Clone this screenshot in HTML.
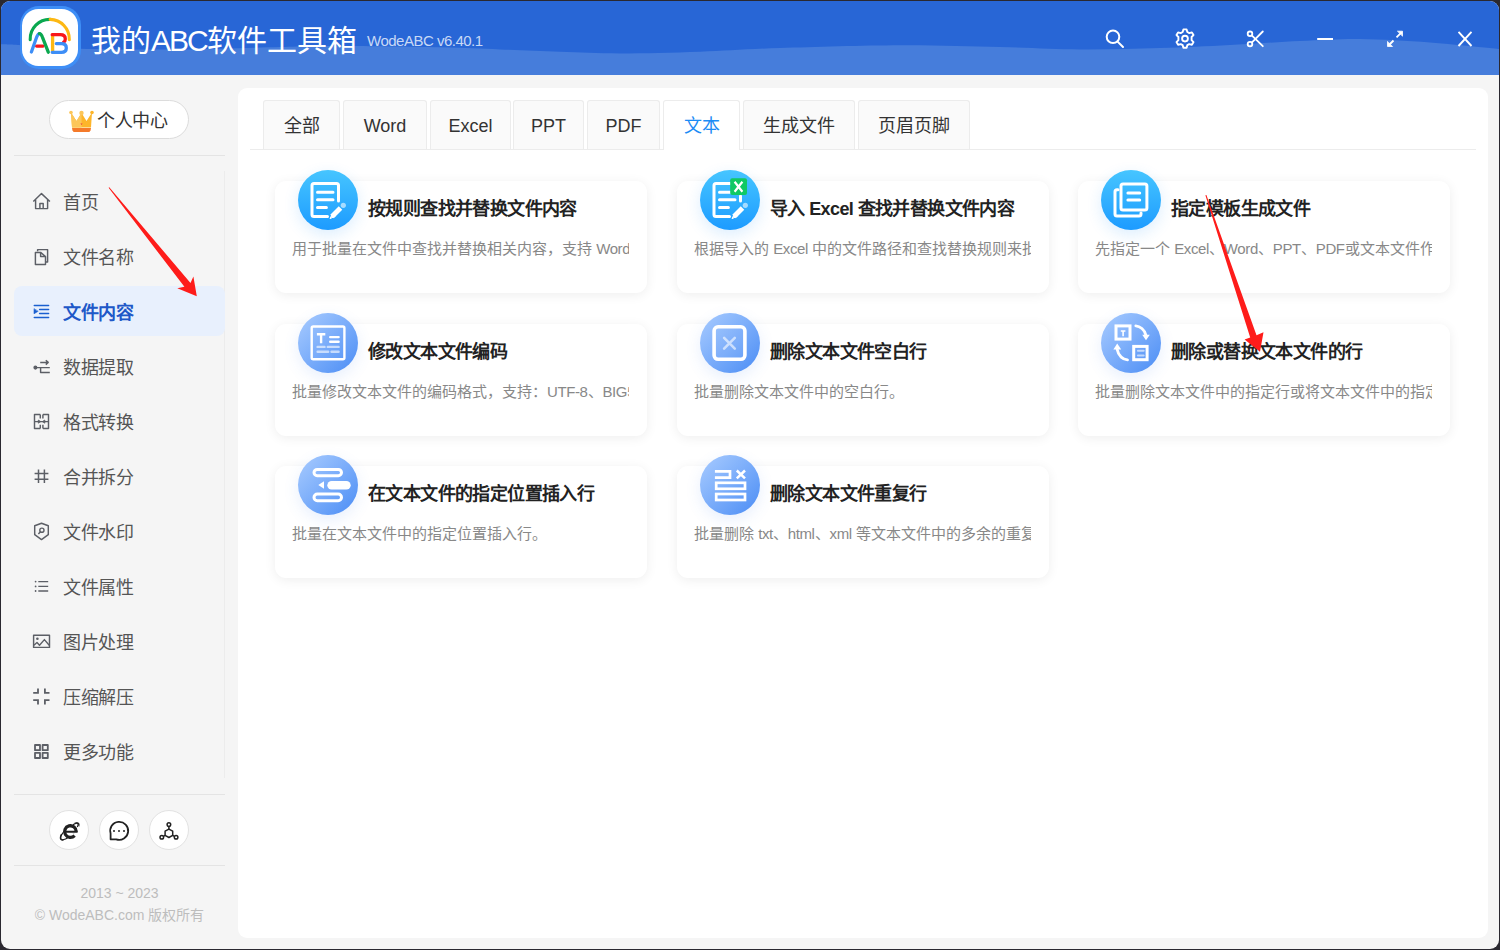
<!DOCTYPE html>
<html lang="zh-CN"><head><meta charset="utf-8">
<style>
*{margin:0;padding:0;box-sizing:border-box}
html,body{width:1500px;height:950px;overflow:hidden;background:#2a2830;font-family:"Liberation Sans",sans-serif}
#win{position:absolute;left:1px;top:1px;width:1498px;height:948px;border-radius:9px;background:#f5f5f5;overflow:hidden}
#hdr{position:absolute;left:0;top:0;width:1498px;height:74px;background:#2866d6;overflow:hidden}
#wave{position:absolute;left:-1px;top:-1px}
.logo{position:absolute;left:18.5px;top:4.8px;width:61.5px;height:63.2px;border-radius:19px;background:#3e8ef6}
.logo .in{position:absolute;left:2.6px;top:3px;width:56.3px;height:57.2px;border-radius:16.5px;background:#fff}
.title{position:absolute;left:90px;top:20px;color:#fff;font-size:30px;line-height:40px;white-space:nowrap}
.ver{position:absolute;left:366px;top:30px;color:#c9d9f5;font-size:15px;line-height:20px;letter-spacing:-0.5px;white-space:nowrap}
.hic{position:absolute;top:27px;width:24px;height:24px}
#side{position:absolute;left:0;top:73px;width:237px;height:875px}
.pc{position:absolute;left:48px;top:26px;width:140px;height:39px;border:1px solid #dcdcdc;border-radius:20px;background:#fff;font-size:18px;color:#333;line-height:37px;white-space:nowrap}
.hr{position:absolute;left:13px;width:211px;height:1px;background:#e4e4e4}
.nav{position:absolute;left:13px;width:211px;height:50px;border-radius:8px;font-size:18px;letter-spacing:-0.5px;color:#555;line-height:50px;white-space:nowrap}
.nav .t{position:absolute;left:49px;top:1px}
.nav svg{position:absolute;left:19px;top:16px}
.nav.act{background:#e8f0fd;color:#2058c8;font-weight:bold}
.cb{position:absolute;top:736px;width:40px;height:40px;border-radius:50%;background:#fff;border:1px solid #e2e2e2}
.cb svg{position:absolute;left:9px;top:9px}
.copy{position:absolute;left:0;width:237px;text-align:center;color:#bdbdbd;font-size:14px;line-height:18px;white-space:nowrap}
#main{position:absolute;left:237px;top:87px;width:1250px;height:850px;border-radius:9px;background:#fff}
.tab{position:absolute;top:12px;height:49px;border:1px solid #ececec;border-bottom:none;background:#fafafa;color:#333;font-size:18px;line-height:51px;text-align:center;white-space:nowrap;border-radius:3px 3px 0 0}
.tab.act{background:#fff;color:#1c8cf5;height:50px;z-index:2}
.tline{position:absolute;left:12px;top:61px;width:1226px;height:1px;background:#ececec}
.card{position:absolute;width:372px;height:112px;border-radius:11px;background:#fff;box-shadow:0 2px 12px rgba(0,0,0,0.07)}
.ic{position:absolute;left:22.5px;top:-11.5px;width:60px;height:60px;border-radius:50%}
.ic.b1{background:linear-gradient(180deg,#46c5ff,#1d9bff);box-shadow:0 5px 15px rgba(40,150,250,0.16)}
.ic.b2{background:linear-gradient(135deg,#a9ccff,#4b8df5);box-shadow:0 5px 15px rgba(70,130,240,0.13)}
.ic svg{position:absolute;left:0;top:0}
.ct{position:absolute;font-size:18px;letter-spacing:-0.6px;font-weight:bold;color:#222;white-space:nowrap;line-height:24px}
.l{letter-spacing:-0.4px}
.cd{position:absolute;font-size:15px;color:#888;white-space:nowrap;overflow:hidden;line-height:20px}
</style></head><body>
<div id="win">
  <div id="hdr">
    <svg id="wave" width="1500" height="76"><path d="M0.0,44.3 C8.0,44.6 4.7,44.2 18.0,45.0 C31.3,45.8 53.0,48.1 80.0,48.8 C107.0,49.5 146.7,49.7 180.0,49.4 C213.3,49.1 253.3,47.6 280.0,47.0 C306.7,46.4 313.3,46.0 340.0,46.0 C366.7,46.0 413.3,46.7 440.0,47.3 C466.7,47.9 480.0,48.6 500.0,49.4 C520.0,50.1 540.0,51.1 560.0,51.8 C580.0,52.5 596.7,53.4 620.0,53.4 C643.3,53.4 673.3,52.6 700.0,51.7 C726.7,50.8 746.7,49.1 780.0,48.0 C813.3,46.9 863.3,45.4 900.0,45.2 C936.7,45.0 970.0,46.3 1000.0,47.0 C1030.0,47.7 1053.3,49.2 1080.0,49.4 C1106.7,49.6 1135.0,48.7 1160.0,48.0 C1185.0,47.3 1206.7,46.2 1230.0,45.0 C1253.3,43.8 1278.3,42.0 1300.0,41.0 C1321.7,40.0 1338.3,38.8 1360.0,39.0 C1381.7,39.2 1406.7,40.8 1430.0,42.5 C1453.3,44.2 1483.3,47.8 1500.0,49.0 L1500,76 L0,76 Z" fill="#467ddb"/></svg>
    <div class="logo"><div class="in"></div></div>
    <div class="title">我的<span style="letter-spacing:-2px">ABC</span>软件工具箱</div>
    <div class="ver">WodeABC v6.40.1</div>
  </div>
  <div id="side">
    <div class="pc"><span style="position:absolute;left:47px;top:2px;letter-spacing:-0.5px">个人中心</span></div>
    <div class="hr" style="top:81px"></div>
    <div style="position:absolute;left:223px;top:97px;width:1px;height:607px;background:#ececec"></div>
    <div class="nav" style="top:103px"><span class="t">首页</span></div>
    <div class="nav" style="top:158px"><span class="t">文件名称</span></div>
    <div class="nav act" style="top:212px"><span class="t" style="top:2px">文件内容</span></div>
    <div class="nav" style="top:268px"><span class="t">数据提取</span></div>
    <div class="nav" style="top:323px"><span class="t">格式转换</span></div>
    <div class="nav" style="top:378px"><span class="t">合并拆分</span></div>
    <div class="nav" style="top:433px"><span class="t">文件水印</span></div>
    <div class="nav" style="top:488px"><span class="t">文件属性</span></div>
    <div class="nav" style="top:543px"><span class="t">图片处理</span></div>
    <div class="nav" style="top:598px"><span class="t">压缩解压</span></div>
    <div class="nav" style="top:653px"><span class="t">更多功能</span></div>
    <div class="hr" style="top:720px"></div>
    <div class="cb" style="left:48px"></div>
    <div class="cb" style="left:98px"></div>
    <div class="cb" style="left:148px"></div>
    <div class="hr" style="top:791px"></div>
    <div class="copy" style="top:810px">2013 ~ 2023</div>
    <div class="copy" style="top:832px">© WodeABC.com 版权所有</div>
  </div>
  <div id="main">
    <div class="tab" style="left:25px;width:77px">全部</div>
    <div class="tab" style="left:105px;width:84px">Word</div>
    <div class="tab" style="left:192px;width:81px">Excel</div>
    <div class="tab" style="left:275px;width:71px">PPT</div>
    <div class="tab" style="left:349px;width:73px">PDF</div>
    <div class="tab act" style="left:425px;width:77px">文本</div>
    <div class="tab" style="left:505px;width:112px">生成文件</div>
    <div class="tab" style="left:620px;width:112px">页眉页脚</div>
    <div class="tline"></div>

    <!-- row 1 -->
    <div class="card" style="left:37px;top:93px">
      <div class="ic b1"><svg width="60" height="60" viewBox="0 0 60 60" fill="none" stroke="#fff" stroke-width="3" stroke-linecap="round" stroke-linejoin="round">
        <path d="M40.5,31 V15.5 a2,2 0 0 0 -2,-2 H16 a2,2 0 0 0 -2,2 V44.6 a2,2 0 0 0 2,2 H29.5"/>
        <path d="M19.5,22.3 H35 M19.5,29.7 H35 M19.5,37.4 H28.4"/>
        <path d="M34,46.5 L42.5,38" stroke-width="5" stroke-linecap="butt"/>
        <path d="M32.2,48.3 L34.6,43.4 L37.1,45.9 Z" fill="#fff" stroke-width="1"/>
        <circle cx="45.3" cy="35.3" r="2.6" fill="#a6dcff" stroke="none"/>
      </svg></div>
      <div class="ct" style="left:93px;top:16px">按规则查找并替换文件内容</div>
      <div class="cd" style="left:17px;top:58px;width:337px">用于批量在文件中查找并替换相关内容，支持 <span class="l">Word、Excel、PPT、PDF</span> 等文件</div>
    </div>
    <div class="card" style="left:439px;top:93px">
      <div class="ic b1"><svg width="60" height="60" viewBox="0 0 60 60" fill="none" stroke="#fff" stroke-width="3" stroke-linecap="round" stroke-linejoin="round">
        <path d="M40.5,31 V26 M30,13.5 H16 a2,2 0 0 0 -2,2 V44.6 a2,2 0 0 0 2,2 H29.5"/>
        <path d="M19.5,22.3 H30 M19.5,29.7 H35 M19.5,37.4 H28.4"/>
        <path d="M34,46.5 L42.5,38" stroke-width="5" stroke-linecap="butt"/>
        <path d="M32.2,48.3 L34.6,43.4 L37.1,45.9 Z" fill="#fff" stroke-width="1"/>
        <circle cx="45.3" cy="35.3" r="2.6" fill="#a6dcff" stroke="none"/>
        <rect x="30.2" y="8.3" width="16.8" height="16.8" rx="2" fill="#10c964" stroke="none"/>
        <path d="M34.6,11.8 L42.4,21.8 M42.4,11.8 L34.6,21.8" stroke-width="2.2" stroke-linecap="butt"/>
      </svg></div>
      <div class="ct" style="left:93px;top:16px">导入 Excel 查找并替换文件内容</div>
      <div class="cd" style="left:17px;top:58px;width:337px">根据导入的 <span class="l">Excel</span> 中的文件路径和查找替换规则来批量替换</div>
    </div>
    <div class="card" style="left:840px;top:93px">
      <div class="ic b1"><svg width="60" height="60" viewBox="0 0 60 60" fill="none" stroke="#fff" stroke-width="3" stroke-linecap="round" stroke-linejoin="round">
        <path d="M17,19.8 H16 a2,2 0 0 0 -2,2 V43.9 a2,2 0 0 0 2,2 H38 a2,2 0 0 0 2,-2 V43"/>
        <rect x="20" y="13.9" width="25.9" height="26.1" rx="2"/>
        <path d="M26.9,22.9 H38.7 M26.9,30 H38.7"/>
      </svg></div>
      <div class="ct" style="left:93px;top:16px">指定模板生成文件</div>
      <div class="cd" style="left:17px;top:58px;width:337px">先指定一个 <span class="l">Excel</span>、<span class="l">Word</span>、<span class="l">PPT</span>、<span class="l">PDF</span>或文本文件作为模板</div>
    </div>
    <!-- row 2 -->
    <div class="card" style="left:37px;top:236px">
      <div class="ic b2"><svg width="60" height="60" viewBox="0 0 60 60" fill="none" stroke="#fff" stroke-width="2.4" stroke-linecap="round">
        <rect x="13.7" y="13.5" width="32.7" height="32.7" rx="1.5"/>
        <path d="M18.9,21.3 H27.3 M23.1,21.3 V30.2" stroke-linecap="butt"/>
        <path d="M32.2,24.1 H40.6 M32.2,28.8 H40.6"/>
        <path d="M19.6,33.9 H26.5 M29.8,33.9 H40.6 M19.6,38.7 H30.2 M33.5,38.7 H40.6" stroke-opacity="0.6"/>
      </svg></div>
      <div class="ct" style="left:93px;top:16px">修改文本文件编码</div>
      <div class="cd" style="left:17px;top:58px;width:337px">批量修改文本文件的编码格式，支持：<span class="l">UTF-8</span>、<span class="l">BIG5</span>、<span class="l">GBK</span> 等</div>
    </div>
    <div class="card" style="left:439px;top:236px">
      <div class="ic b2"><svg width="60" height="60" viewBox="0 0 60 60" fill="none" stroke="#fff" stroke-width="3.6" stroke-linecap="round">
        <rect x="14.1" y="13.8" width="30.8" height="32.5" rx="4" fill="rgba(255,255,255,0.06)"/>
        <path d="M24.1,24.8 L34.8,35.6 M34.8,24.8 L24.1,35.6" stroke-width="2.6" stroke-opacity="0.6"/>
      </svg></div>
      <div class="ct" style="left:93px;top:16px">删除文本文件空白行</div>
      <div class="cd" style="left:17px;top:58px;width:337px">批量删除文本文件中的空白行。</div>
    </div>
    <div class="card" style="left:840px;top:236px">
      <div class="ic b2"><svg width="60" height="60" viewBox="0 0 60 60" fill="none" stroke="#fff" stroke-width="3" stroke-linecap="round">
        <rect x="15" y="12.9" width="14" height="13.2"/>
        <path d="M19.8,18 H24.4 M22.1,18 V23.2" stroke-width="1.6" stroke-linecap="butt"/>
        <rect x="32.7" y="33.4" width="13.4" height="13.3"/>
        <path d="M36.9,37.8 H42.7 M36.9,42.6 H42.7" stroke-width="2" stroke-opacity="0.6"/>
        <path d="M34.8,12.9 C39,13.2 43.5,16.5 45,22.3" stroke-width="2.8"/>
        <path d="M41.2,21.8 L48.8,21.8 L45,27.3 Z" fill="#fff" stroke="none"/>
        <path d="M26.5,46.9 C22.2,46.6 17.4,43.2 16.2,36.5" stroke-width="2.8"/>
        <path d="M12.4,36.6 L20.2,36.6 L16.2,30.6 Z" fill="#fff" stroke="none"/>
      </svg></div>
      <div class="ct" style="left:93px;top:16px">删除或替换文本文件的行</div>
      <div class="cd" style="left:17px;top:58px;width:337px">批量删除文本文件中的指定行或将文本文件中的指定行替换</div>
    </div>
    <!-- row 3 -->
    <div class="card" style="left:37px;top:378px">
      <div class="ic b2"><svg width="60" height="60" viewBox="0 0 60 60" fill="none" stroke="#fff" stroke-width="3" stroke-linecap="round">
        <rect x="16" y="14.4" width="27.5" height="6.3" rx="3.15"/>
        <rect x="16" y="39.1" width="27.5" height="6.6" rx="3.3"/>
        <rect x="29.3" y="26" width="23.4" height="8.6" rx="4.3" fill="#fff" stroke="none"/>
        <path d="M20.3,29.9 L26,26.2 L26,33.7 Z" fill="#fff" stroke="none"/>
      </svg></div>
      <div class="ct" style="left:93px;top:16px">在文本文件的指定位置插入行</div>
      <div class="cd" style="left:17px;top:58px;width:337px">批量在文本文件中的指定位置插入行。</div>
    </div>
    <div class="card" style="left:439px;top:378px">
      <div class="ic b2"><svg width="60" height="60" viewBox="0 0 60 60" fill="none" stroke="#fff" stroke-width="2.7">
        <path d="M14.9,16.3 H30 V22.6 H14.9"/>
        <path d="M36.8,15.5 L45,23.4 M45,15.5 L36.8,23.4" stroke-width="2.5"/>
        <rect x="16.2" y="27.8" width="28.8" height="6"/>
        <rect x="16.2" y="39" width="28.8" height="6"/>
      </svg></div>
      <div class="ct" style="left:93px;top:16px">删除文本文件重复行</div>
      <div class="cd" style="left:17px;top:58px;width:337px">批量删除 <span class="l">txt</span>、<span class="l">html</span>、<span class="l">xml</span> 等文本文件中的多余的重复行</div>
    </div>
  </div>

  <svg id="ov" width="1500" height="950" viewBox="0 0 1500 950" style="position:absolute;left:-1px;top:-1px;z-index:5;pointer-events:none" fill="none">
    <!-- logo -->
    <g stroke-linecap="round" stroke-linejoin="round" stroke-width="3.3">
      <path d="M30.2,39.6 A19.6,19.6 0 0 1 50.2,19.4" stroke="#0aa84f" stroke-width="3.1"/>
      <path d="M50.2,19.4 A19.6,19.6 0 0 1 69.3,39.6" stroke="#fdb813" stroke-width="3.1"/>
      <path d="M36.6,46.1 H43" stroke="#f8161a"/>
      <path d="M52.6,35 V52" stroke="#fdb813"/>
      <path d="M31.4,52 L36.6,37.3 Q38,33.6 39.6,33.6" stroke="#3d8ef7"/>
      <path d="M39.4,33.6 Q41.2,33.6 42.5,37.3 L48.3,52.2" stroke="#0aa84f"/>
      <path d="M52.2,34.7 H60.3 C63.8,34.7 65.3,36.6 65.3,38.9 C65.3,40.6 64.6,41.6 63.6,42.2" stroke="#f8161a"/>
      <path d="M56.3,43.6 H61.6 C64.6,43.6 66.3,45.4 66.3,47.9 C66.3,50.6 64.4,52.3 61.2,52.3 H52.2" stroke="#3d8ef7"/>
    </g>
    <!-- header icons -->
    <g stroke="#fff" stroke-width="2" stroke-linecap="round">
      <circle cx="1113" cy="36.8" r="6.3"/>
      <path d="M1117.6,41.6 L1123,47"/>
      <g transform="translate(1185,38.6)">
        <path d="M-1.6,-9.2 L1.6,-9.2 L2.3,-6.6 L4.3,-5.5 L6.9,-6.2 L8.5,-3.5 L6.6,-1.6 L6.6,1.6 L8.5,3.5 L6.9,6.2 L4.3,5.5 L2.3,6.6 L1.6,9.2 L-1.6,9.2 L-2.3,6.6 L-4.3,5.5 L-6.9,6.2 L-8.5,3.5 L-6.6,1.6 L-6.6,-1.6 L-8.5,-3.5 L-6.9,-6.2 L-4.3,-5.5 L-2.3,-6.6 Z" stroke-linejoin="round" stroke-width="1.9"/>
        <circle cx="0" cy="0" r="2.9" stroke-width="1.9"/>
      </g>
      <circle cx="1250" cy="33.8" r="2.3" stroke-width="1.8"/>
      <circle cx="1250" cy="44.1" r="2.3" stroke-width="1.8"/>
      <path d="M1252,35.6 L1262.8,46.2 M1252,42.3 L1262.8,31.5" stroke-width="1.8"/>
      <path d="M1317.2,39 H1333" stroke-linecap="butt"/>
      <path d="M1389,45 L1393.5,40.5 M1396.5,37.3 L1401,32.8" stroke-linecap="butt" stroke-width="1.8"/>
      <path d="M1387.5,41.8 V46.5 H1392.2 Z M1402.5,35.8 V31.2 H1397.8 Z" fill="#fff" stroke-width="0.8" stroke-linejoin="round"/>
      <path d="M1458.5,31.8 L1471.5,46 M1471.5,31.8 L1458.5,46" stroke-linecap="butt" stroke-width="1.9"/>
    </g>
    <!-- crown -->
    <g>
      <path d="M71,112.5 L76.5,121 L81.5,113 L86.5,121 L92,112.5 L91,127.5 H72 Z" fill="#fdb52a"/>
      <path d="M71,112.5 L76.5,121 L81.5,113 L81.5,127.5 H72 Z" fill="#fcc65a"/>
      <circle cx="71" cy="112.5" r="1.8" fill="#fcc65a"/>
      <circle cx="81.5" cy="113" r="2.2" fill="#fcc65a"/>
      <circle cx="92" cy="112.5" r="1.8" fill="#fdb52a"/>
      <path d="M72,128 H91 L90.5,130.5 Q90,132 88.5,132 H74.5 Q73,132 72.5,130.5 Z" fill="#f47a2a"/>
      <path d="M80.5,123.5 H82.5 L81.5,125 Z" fill="#e8363a"/>
    </g>
    <!-- sidebar icons -->
    <g stroke="#5c5f66" stroke-width="1.45" stroke-linejoin="round">
      <path d="M33.3,201.5 L41.5,193.6 L49.9,201.5 M35.6,199.5 V208.6 H47.6 V199.5 M39.9,208.6 V203.4 H43.2 V208.6"/>
      <path d="M37.6,251.2 V249.6 H47.6 V262 H45.6 M35.4,264.5 V252.4 H40.6 L45.5,256.5 V264.5 Z M40.6,252.4 V256.5 H45.5"/>
      <path d="M40.2,362.4 H48 M45.8,360.2 L48.2,362.4 L45.8,364.6 M35.4,367.6 H49.8 M40.6,367.6 V372.5 H49.8"/>
      <circle cx="35.4" cy="367.6" r="1.3" fill="#5c5f66"/>
      <path d="M40.3,414.5 H34.5 V428.5 H40.3 M42.9,414.5 H48.5 V428.5 H42.9 M40.3,414.5 V418.5 M40.3,424.8 V428.5 M42.9,414.5 V418.5 M42.9,424.8 V428.5 M34.5,421.6 H48.5"/>
      <path d="M38.3,420 L40.8,421.6 L38.3,423.2 Z M44.8,420 L42.3,421.6 L44.8,423.2 Z" fill="#5c5f66" stroke-width="0.8"/>
      <path d="M38.5,469.6 V483.1 M44.4,469.6 V483.1 M34.6,473.4 H48.4 M34.6,479.3 H48.4" stroke-width="1.5"/>
      <path d="M41.5,523.2 L48.3,525.8 V534.7 L41.5,539.6 L34.7,534.7 V525.8 Z"/>
      <circle cx="41.9" cy="530.2" r="2.1" stroke-width="1.4"/>
      <path d="M40.4,531.8 L38.4,533.9" stroke-width="1.4"/>
      <path d="M38.3,581.6 H48.2 M38.3,586.4 H48.2 M38.3,591 H48.2" stroke-width="1.4"/>
      <circle cx="35.6" cy="581.6" r="0.9" fill="#5c5f66" stroke="none"/>
      <circle cx="35.6" cy="586.4" r="0.9" fill="#5c5f66" stroke="none"/>
      <circle cx="35.6" cy="591" r="0.9" fill="#5c5f66" stroke="none"/>
      <rect x="33.6" y="635.3" width="15.9" height="12.1"/>
      <circle cx="37.4" cy="638.8" r="1.3" fill="#5c5f66" stroke="none"/>
      <path d="M33.9,645.2 L37,642.5 L39.5,645.2 L44.4,639.6 L49.2,645.2" stroke-width="1.4"/>
      <path d="M33.2,692.8 H38 V688.5 M44.9,688.5 V692.8 H49.5 M33.2,700.2 H38 V704.4 M49.5,700.2 H44.9 V704.4" stroke-width="1.8" stroke-linejoin="miter"/>
      <rect x="35" y="745" width="5" height="5.2" stroke-width="1.8"/>
      <rect x="42.6" y="745" width="5.2" height="5.2" stroke-width="1.8"/>
      <rect x="35" y="752.8" width="5" height="5.2" stroke-width="1.8"/>
      <rect x="42.6" y="752.8" width="5.2" height="5.2" stroke-width="1.8"/>
    </g>
    <!-- active indent icon -->
    <g stroke="#1a5fd0" stroke-width="1.5" stroke-linecap="round">
      <path d="M34.3,305.5 H48.6 M39.6,309.5 H48.6 M39.6,313.5 H48.6 M34.3,317.5 H48.6"/>
      <path d="M34,309 V313.8 L37.9,311.4 Z" fill="#1a5fd0" stroke-width="0.6"/>
    </g>
    <!-- bottom circle icons -->
    <g stroke="#222" stroke-width="1.8">
      <path d="M110.6,833.5 V839.3 H116.2 A9,9 0 1 0 110.6,833.5 Z" stroke-linejoin="round"/>
      <circle cx="114" cy="831" r="1" fill="#222" stroke="none"/>
      <circle cx="119" cy="831" r="1" fill="#222" stroke="none"/>
      <circle cx="124" cy="831" r="1" fill="#222" stroke="none"/>
      <circle cx="168.9" cy="824.6" r="1.8" stroke-width="1.5"/>
      <path d="M168.9,826.4 V829.1 M165.1,835.4 L163.4,836.4 M172.7,835.4 L174.4,836.4" stroke-width="1.5"/>
      <path d="M168.9,829.1 L172.7,831.2 V835.4 L168.9,837.5 L165.1,835.4 V831.2 Z" stroke-width="1.5" stroke-linejoin="round"/>
      <circle cx="161.8" cy="837.2" r="1.8" stroke-width="1.5"/>
      <circle cx="176.1" cy="837.2" r="1.8" stroke-width="1.5"/>
    </g>
    <g>
      <ellipse cx="69.8" cy="831.3" rx="11.8" ry="4.1" transform="rotate(-42 69.8 831.3)" stroke="#222" stroke-width="1.2"/>
      <path d="M65,831.8 H77.6" stroke="#fff" stroke-width="4"/>
      <path d="M77.2,831.8 A5.8,5.8 0 1 0 74.6,835.6" stroke="#fff" stroke-width="5.5"/>
      <path d="M65,831.8 H77.6" stroke="#222" stroke-width="2"/>
      <path d="M76.2,831.8 A5.8,5.8 0 1 0 74.6,835.6" stroke="#222" stroke-width="3.3"/>
      <path d="M61.5,834 C59,839 61,841 64,839.5" stroke="#222" stroke-width="1.2"/>
      <path d="M73,824.8 C77,822 79.5,823 77.3,827" stroke="#222" stroke-width="1.2"/>
    </g>
    <!-- red arrows -->
    <path d="M108.6,187.8 L109.3,187.3 L190.5,283 L193.4,276.5 L196.8,296.3 L177.3,288.2 L184.4,286.8 Z" fill="#fe1c1a"/>
    <path d="M1205.4,195.3 L1206.4,195 L1256.5,335.3 L1263.5,332.3 L1260,351.8 L1244.6,339.4 L1250.2,337.6 Z" fill="#fe1c1a"/>
  </svg>
</div>
</body></html>
